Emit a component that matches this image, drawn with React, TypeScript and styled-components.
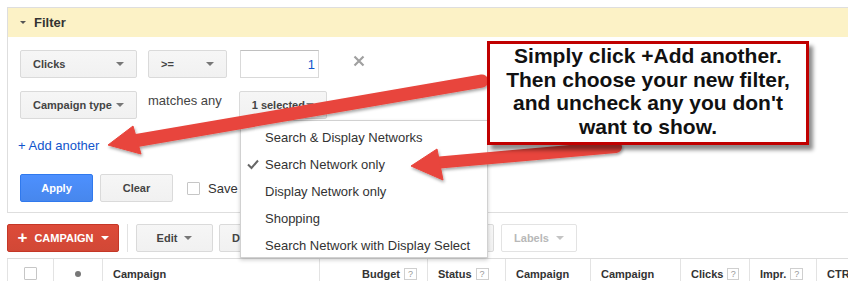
import * as React from "react";
import styled, { createGlobalStyle, css } from "styled-components";

const GlobalStyle = createGlobalStyle`
  html, body {
    margin: 0;
    padding: 0;
    background: #fff;
  }
  body {
    font-family: "Liberation Sans", Arial, sans-serif;
    overflow: hidden;
  }
`;

const Page = styled.div`
  position: relative;
  width: 848px;
  height: 281px;
  overflow: hidden;
  padding: 7px 0 0 7px;
  box-sizing: border-box;
`;

const FilterPanel = styled.section`
  height: 206px;
  border: 1px solid #dedede;
  border-right: none;
  box-sizing: border-box;
`;

const PanelHeader = styled.div`
  height: 29px;
  background: #fcf2c6;
  display: flex;
  align-items: center;
  gap: 8px;
  padding-left: 12px;
  font-size: 13px;
  font-weight: bold;
  color: #333;
`;

const Caret = styled.span<{ $color?: string; $size?: number }>`
  display: inline-block;
  width: 0;
  height: 0;
  border-left: ${(p) => p.$size ?? 4}px solid transparent;
  border-right: ${(p) => p.$size ?? 4}px solid transparent;
  border-top: ${(p) => p.$size ?? 4}px solid ${(p) => p.$color ?? "#777"};
  flex-shrink: 0;
`;

const PanelBody = styled.div`
  padding: 13px 0 0 12px;
  display: flex;
  flex-direction: column;
`;

const FilterRow = styled.div<{ $gapTop?: number }>`
  display: flex;
  align-items: center;
  height: 28px;
  margin-top: ${(p) => p.$gapTop ?? 0}px;
`;

const Select = styled.div<{ $width: number; $ml?: number }>`
  width: ${(p) => p.$width}px;
  margin-left: ${(p) => p.$ml ?? 0}px;
  height: 28px;
  box-sizing: border-box;
  border: 1px solid #dadada;
  border-radius: 2px;
  background: linear-gradient(#f6f6f6, #f1f1f1);
  display: flex;
  align-items: center;
  justify-content: space-between;
  padding: 0 12px;
  font-size: 11px;
  font-weight: bold;
  color: #444;
  flex-shrink: 0;
`;

const ValueInput = styled.div<{ $ml: number }>`
  width: 79px;
  height: 28px;
  margin-left: ${(p) => p.$ml}px;
  box-sizing: border-box;
  border: 1px solid #d9d9d9;
  border-top-color: #c0c0c0;
  font-size: 13px;
  color: #1155cc;
  display: flex;
  align-items: center;
  justify-content: flex-end;
  padding-right: 3px;
`;

const Plain = styled.span<{ $ml: number }>`
  margin-left: ${(p) => p.$ml}px;
  font-size: 13px;
  color: #444;
  align-self: flex-start;
  margin-top: 2px;
`;

const RemoveIcon = styled.svg<{ $ml: number }>`
  margin-left: ${(p) => p.$ml}px;
  width: 12px;
  height: 12px;
  margin-top: -6px;
`;

const AddLink = styled.a`
  margin-top: 19px;
  height: 16px;
  line-height: 16px;
  font-size: 13px;
  color: #1155cc;
  text-decoration: none;
  margin-left: -2px;
`;

const ActionRow = styled.div`
  display: flex;
  align-items: center;
  margin-top: 20px;
  height: 28px;
`;

const buttonVariants = {
  default: css`
    background: linear-gradient(#f6f6f6, #f1f1f1);
    border: 1px solid #dadada;
    color: #444;
  `,
  primary: css`
    background: linear-gradient(#4d90fe, #4787ed);
    border: 1px solid #3079ed;
    color: #fff;
  `,
  red: css`
    background: linear-gradient(#dd4b39, #d14836);
    border: 1px solid #c53727;
    color: #fff;
  `,
  disabled: css`
    background: #fff;
    border: 1px solid #e3e3e3;
    color: #b8b8b8;
  `,
};

type Variant = keyof typeof buttonVariants;

const Button = styled.div<{ $variant?: Variant; $width: number; $ml?: number }>`
  width: ${(p) => p.$width}px;
  margin-left: ${(p) => p.$ml ?? 0}px;
  height: 28px;
  box-sizing: border-box;
  border-radius: 2px;
  display: flex;
  align-items: center;
  justify-content: center;
  gap: 7px;
  font-size: 11px;
  font-weight: bold;
  flex-shrink: 0;
  ${(p) => buttonVariants[p.$variant ?? "default"]}
`;

const Checkbox = styled.span<{ $ml?: number }>`
  display: inline-block;
  width: 13px;
  height: 13px;
  margin-left: ${(p) => p.$ml ?? 0}px;
  box-sizing: border-box;
  border: 1px solid #c6c6c6;
  border-radius: 1px;
  background: #fff;
  flex-shrink: 0;
`;

const SaveLabel = styled.span`
  margin-left: 8px;
  font-size: 13px;
  color: #333;
`;

const Toolbar = styled.div`
  height: 45px;
  box-sizing: border-box;
  padding-top: 11px;
  display: flex;
  align-items: flex-start;
`;

const Divider = styled.span`
  width: 1px;
  height: 28px;
  background: #e2e2e2;
  margin-left: 8px;
`;

const PlusMark = styled.span`
  font-size: 17px;
  font-weight: 900;
  line-height: 1;
  margin-top: -2px;
`;

const HeaderRow = styled.div`
  display: flex;
  height: 30px;
  border-top: 1px solid #dcdcdc;
  box-sizing: border-box;
`;

const HeadCell = styled.div<{ $width?: number; $align?: "left" | "center" | "right" }>`
  ${(p) => (p.$width ? `width: ${p.$width}px;` : "flex: 1;")}
  box-sizing: border-box;
  border-left: 1px solid #e3e3e3;
  display: flex;
  align-items: center;
  justify-content: ${(p) => (p.$align === "right" ? "flex-end" : p.$align === "center" ? "center" : "flex-start")};
  padding: 0 10px;
  font-size: 11px;
  font-weight: bold;
  color: #333;
  flex-shrink: 0;
  white-space: nowrap;
`;

const HelpBox = styled.span`
  margin-left: 4px;
  width: 13px;
  height: 12px;
  box-sizing: border-box;
  border: 1px solid #cfcfcf;
  font-size: 9px;
  font-weight: normal;
  color: #999;
  display: inline-flex;
  align-items: center;
  justify-content: center;
`;

const Dot = styled.span`
  width: 6px;
  height: 6px;
  border-radius: 50%;
  background: #777;
`;

const Menu = styled.ul`
  position: absolute;
  left: 240px;
  top: 120px;
  width: 248px;
  height: 138px;
  margin: 0;
  padding: 3px 0 0;
  list-style: none;
  box-sizing: border-box;
  background: #fff;
  border: 1px solid rgba(0, 0, 0, 0.18);
  box-shadow: 0 2px 4px rgba(0, 0, 0, 0.2);
  z-index: 2;
`;

const MenuItem = styled.li`
  position: relative;
  height: 27px;
  line-height: 27px;
  padding-left: 24px;
  font-size: 13px;
  color: #333;
  white-space: nowrap;
`;

const Check = styled.svg`
  position: absolute;
  left: 6px;
  top: 8px;
  width: 12px;
  height: 11px;
`;

const Arrows = styled.svg`
  position: absolute;
  left: 0;
  top: 0;
  width: 848px;
  height: 281px;
  pointer-events: none;
  z-index: 3;
`;

const Callout = styled.div`
  position: absolute;
  left: 487px;
  top: 41px;
  width: 322px;
  height: 104px;
  box-sizing: border-box;
  border: 3px solid #c00000;
  background: #fff;
  box-shadow: 4px 5px 4px rgba(0, 0, 0, 0.45);
  text-align: center;
  font-size: 21px;
  line-height: 23.6px;
  font-weight: bold;
  color: #111;
  white-space: nowrap;
  z-index: 4;
`;

const menuItems = [
  "Search & Display Networks",
  "Search Network only",
  "Display Network only",
  "Shopping",
  "Search Network with Display Select",
];

const columns = [
  { label: "Campaign", width: 217, help: false, align: "left" as const },
  { label: "Budget", width: 108, help: true, align: "right" as const },
  { label: "Status", width: 78, help: true, align: "left" as const },
  { label: "Campaign", width: 85, help: false, align: "left" as const },
  { label: "Campaign", width: 90, help: false, align: "left" as const },
  { label: "Clicks", width: 69, help: true, align: "left" as const },
  { label: "Impr.", width: 67, help: true, align: "left" as const },
  { label: "CTR", width: 0, help: false, align: "left" as const },
];

const XIcon: React.FC<{ ml: number }> = ({ ml }) => (
  <RemoveIcon $ml={ml} viewBox="0 0 12 12">
    <path d="M1.5 1.5 L10.5 10.5 M10.5 1.5 L1.5 10.5" stroke="#a0a0a0" strokeWidth="2.2" />
  </RemoveIcon>
);

const App: React.FC = () => {
  return (
    <Page>
      <GlobalStyle />
      <FilterPanel>
        <PanelHeader>
          <Caret $color="#555" $size={3.5} />
          Filter
        </PanelHeader>
        <PanelBody>
          <FilterRow>
            <Select $width={117}>
              Clicks <Caret />
            </Select>
            <Select $width={79} $ml={11}>
              &gt;= <Caret />
            </Select>
            <ValueInput $ml={13}>1</ValueInput>
            <XIcon ml={34} />
          </FilterRow>
          <FilterRow $gapTop={13}>
            <Select $width={117}>
              Campaign type <Caret />
            </Select>
            <Plain $ml={11}>matches any</Plain>
            <Select $width={88} $ml={17}>
              1 selected <Caret />
            </Select>
            <XIcon ml={26} />
          </FilterRow>
          <AddLink>+ Add another</AddLink>
          <ActionRow>
            <Button $variant="primary" $width={73}>
              Apply
            </Button>
            <Button $width={73} $ml={7}>
              Clear
            </Button>
            <Checkbox $ml={14} />
            <SaveLabel>Save filter</SaveLabel>
          </ActionRow>
        </PanelBody>
      </FilterPanel>

      <Toolbar>
        <Button $variant="red" $width={112}>
          <PlusMark>+</PlusMark>
          CAMPAIGN
          <Caret $color="#fff" />
        </Button>
        <Divider />
        <Button $width={77} $ml={8}>
          Edit <Caret />
        </Button>
        <Button $width={77} $ml={6}>
          Details <Caret />
        </Button>
        <Button $width={108} $ml={6}>
          Bid strategy <Caret />
        </Button>
        <Button $width={78} $ml={6}>
          Automate <Caret />
        </Button>
        <Button $variant="disabled" $width={76} $ml={7}>
          Labels <Caret $color="#c4c4c4" />
        </Button>
      </Toolbar>

      <HeaderRow>
        <HeadCell $width={46} $align="center">
          <Checkbox />
        </HeadCell>
        <HeadCell $width={49} $align="center">
          <Dot />
        </HeadCell>
        {columns.map((col, i) => (
          <HeadCell key={i} $width={col.width || undefined} $align={col.align}>
            {col.label}
            {col.help && <HelpBox>?</HelpBox>}
          </HeadCell>
        ))}
      </HeaderRow>

      <Menu>
        {menuItems.map((item) => (
          <MenuItem key={item}>
            {item === "Search Network only" && (
              <Check viewBox="0 0 12 11">
                <path d="M1 5.5 L4.5 9 L11 1.5" fill="none" stroke="#666" strokeWidth="2" />
              </Check>
            )}
            {item}
          </MenuItem>
        ))}
      </Menu>

      <Arrows viewBox="0 0 848 281">
        <defs>
          <filter id="arrowShadow" x="-10%" y="-30%" width="120%" height="160%">
            <feDropShadow dx="1" dy="2" stdDeviation="1.5" floodColor="#000" floodOpacity="0.35" />
          </filter>
        </defs>
        <g filter="url(#arrowShadow)" fill="#e8453c" stroke="#e8453c">
          <line x1="482" y1="81" x2="128" y2="142" strokeWidth="13" strokeLinecap="round" />
          <polygon points="108,145 133,126 141,154" strokeWidth="1" strokeLinejoin="round" />
          <line x1="616" y1="147" x2="434" y2="163" strokeWidth="12" strokeLinecap="round" />
          <polygon points="411,166 437,149 443,180" strokeWidth="1" strokeLinejoin="round" />
        </g>
      </Arrows>

      <Callout>
        Simply click +Add another.
        <br />
        Then choose your new filter,
        <br />
        and uncheck any you don't
        <br />
        want to show.
      </Callout>
    </Page>
  );
};

export default App;
